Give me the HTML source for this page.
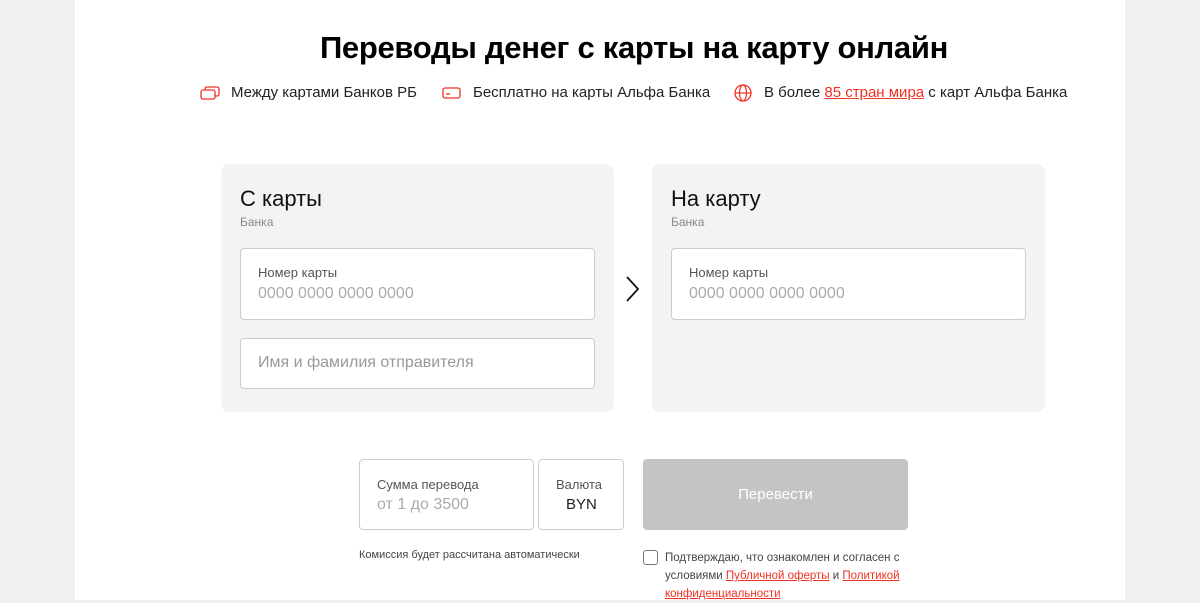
<!DOCTYPE html><html><head><meta charset="utf-8"><style>
*{margin:0;padding:0;box-sizing:border-box}
body{width:1200px;height:600px;overflow:hidden;background:#f0f0f0;font-family:"Liberation Sans",sans-serif;color:#0b1f35;position:relative}
.main{position:absolute;left:75px;top:0;width:1050px;height:600px;background:#fff}
.a{position:absolute}
h1{position:absolute;left:0;width:1268px;top:30px;text-align:center;font-size:31px;font-weight:bold;color:#000;letter-spacing:-0.3px}
.feat{font-size:15px;color:#222;top:84px}
.panel{background:#f3f3f3;border-radius:8px;width:393px;height:248px;top:164px}
.ttl{font-size:22px;color:#111}
.sub{font-size:12px;color:#888}
.inp{background:#fff;border:1px solid #ccc;border-radius:4px}
.lbl{font-size:13px;color:#555}
.ph{font-size:16px;color:#aaa}
a{color:#ef3124}
</style></head><body>
<div class="main"></div>
<h1>Переводы денег с карты на карту онлайн</h1>
<svg class="a" style="left:200px;top:86px" width="20" height="14"><rect x="5" y="1" width="14" height="9" rx="2" fill="none" stroke="#ef3124" stroke-width="1.3"/><rect x="1" y="4" width="14" height="9" rx="2" fill="#fff" stroke="#ef3124" stroke-width="1.3"/></svg>
<div class="a feat" style="left:231px">Между картами Банков РБ</div>
<svg class="a" style="left:442px;top:86px" width="20" height="14"><rect x="1" y="2" width="17" height="10" rx="2" fill="none" stroke="#ef3124" stroke-width="1.3"/><line x1="4" y1="8" x2="8" y2="8" stroke="#ef3124" stroke-width="1.3"/></svg>
<div class="a feat" style="left:473px">Бесплатно на карты Альфа Банка</div>
<svg class="a" style="left:733px;top:83px" width="20" height="20"><circle cx="10" cy="10" r="8" fill="none" stroke="#ef3124" stroke-width="1.3"/><ellipse cx="10" cy="10" rx="3.5" ry="8" fill="none" stroke="#ef3124" stroke-width="1.2"/><line x1="2" y1="10" x2="18" y2="10" stroke="#ef3124" stroke-width="1.2"/></svg>
<div class="a feat" style="left:764px">В более <a href="#">85 стран мира</a> с карт Альфа Банка</div>

<div class="a panel" style="left:221px"></div>
<div class="a ttl" style="left:240px;top:186px">С карты</div>
<div class="a sub" style="left:240px;top:215px">Банка</div>
<div class="a inp" style="left:240px;top:248px;width:355px;height:72px"></div>
<div class="a lbl" style="left:258px;top:265px">Номер карты</div>
<div class="a ph" style="left:258px;top:285px">0000 0000 0000 0000</div>
<div class="a inp" style="left:240px;top:338px;width:355px;height:51px"></div>
<div class="a ph" style="left:258px;top:354px;color:#999">Имя и фамилия отправителя</div>
<svg class="a" style="left:624px;top:275px" width="18" height="28"><path d="M3 2 L14 14 L3 26" fill="none" stroke="#111" stroke-width="1.8"/></svg>

<div class="a panel" style="left:652px"></div>
<div class="a ttl" style="left:671px;top:186px">На карту</div>
<div class="a sub" style="left:671px;top:215px">Банка</div>
<div class="a inp" style="left:671px;top:248px;width:355px;height:72px"></div>
<div class="a lbl" style="left:689px;top:265px">Номер карты</div>
<div class="a ph" style="left:689px;top:285px">0000 0000 0000 0000</div>

<div class="a inp" style="left:359px;top:459px;width:175px;height:71px"></div>
<div class="a lbl" style="left:377px;top:477px">Сумма перевода</div>
<div class="a ph" style="left:377px;top:496px">от 1 до 3500</div>
<div class="a inp" style="left:538px;top:459px;width:86px;height:71px"></div>
<div class="a lbl" style="left:556px;top:477px">Валюта</div>
<div class="a" style="left:566px;top:496px;font-size:15px;color:#222">BYN</div>
<div class="a" style="left:643px;top:459px;width:265px;height:71px;background:#c4c4c4;border-radius:4px;color:#fff;font-size:15px;text-align:center;line-height:71px">Перевести</div>
<div class="a" style="left:359px;top:549px;font-size:11px;color:#444">Комиссия будет рассчитана автоматически</div>
<div class="a" style="left:643px;top:550px;width:15px;height:15px;border:1.5px solid #777;border-radius:3px"></div>
<div class="a" style="left:665px;top:549px;font-size:11.5px;color:#444;line-height:18px;width:260px">Подтверждаю, что ознакомлен и согласен с условиями <a href="#">Публичной оферты</a> и <a href="#">Политикой конфиденциальности</a></div>
</body></html>
